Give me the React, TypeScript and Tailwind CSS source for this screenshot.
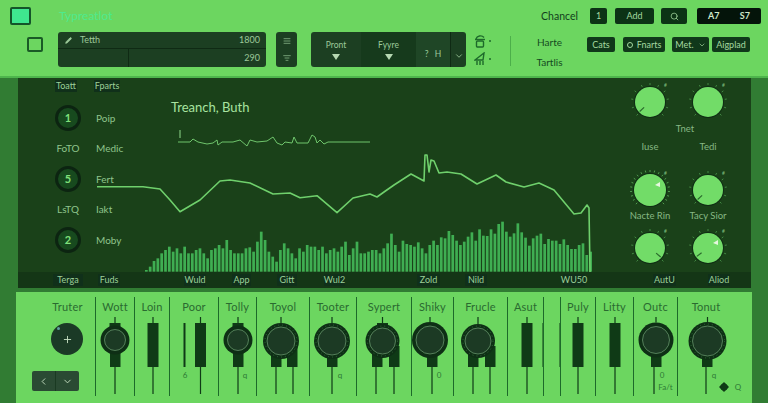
import { AlignJustify, ChevronDown, ChevronLeft, ListFilter, Pencil, Plus, Search } from 'lucide-react';

// waveform traces, page coordinates
const mainLine =
  '97,186.7 143,186.7 160,189 170,200 180,211.7 200,200 220,181 230,180 250,183 273,194 290,193 300,197.7 317,195.7 337,212.7 353,198 370,194 377,197 384,192 394,185 411,174 424,181 425,155 427,155 429,172 431,160 434,161 439,173 447,172 461,174 477,184 496,175 506,182 524,187 539,183 554,190 574,214 581,213 587,205 589,208 590,272';

const smallLine =
  '178,142 190,142 193,139 198,142 207,144 213,143 217,140 218,145 222,142 233,142 240,140 247,146 250,140 257,142 267,141 273,137 277,143 282,145 285,142 292,143 294,137 297,143 308,143 312,135 315,137 317,143 320,140 324,144 328,142 370,142';

const barTops = [
  585, 575, 558, 550, 535, 525, 515, 530, 520, 535, 515, 535, 535, 525, 520, 535, 550, 525, 520, 510, 520, 495, 525, 535,
  535, 535, 520, 517, 530, 500, 470, 495, 530, 545, 560, 525, 505, 520, 535, 550, 520, 530, 510, 515, 515, 525, 515, 535,
  525, 520, 530, 515, 500, 540, 520, 500, 535, 535, 530, 525, 525, 535, 520, 505, 476, 510, 530, 497, 507, 510, 515, 502,
  520, 535, 510, 497, 510, 487, 490, 468, 480, 497, 510, 500, 485, 472, 497, 463, 482, 483, 463, 476, 447, 440, 470, 485,
  475, 445, 472, 488, 512, 490, 482, 476, 507, 492, 497, 497, 507, 493, 510, 522, 522, 510, 505, 540, 530,
];

function Chip({ className, children }: { className: string; children: React.ReactNode }) {
  return (
    <span className={`flex h-[12px] items-center justify-center whitespace-nowrap bg-[#10301a] text-[9px] text-[#9ccf98] ${className}`}>
      {children}
    </span>
  );
}

function HeaderButton({ className, children }: { className: string; children: React.ReactNode }) {
  return (
    <div className={`flex h-[15px] items-center justify-center gap-1 rounded-[2px] bg-[#10381a] text-[9px] text-[#a5d8a0] ${className}`}>
      {children}
    </div>
  );
}

function NumberBadge({ value }: { value: number }) {
  return (
    <div className="flex h-[26px] w-[26px] shrink-0 items-center justify-center rounded-full border-[3px] border-[#0c2411] bg-[#174a1e] text-[11px] font-bold text-[#7fe07a]">
      {value}
    </div>
  );
}

function PanelRow({ tag, label, value }: { tag?: string; label: string; value?: number }) {
  return (
    <div className="flex h-[30.5px] items-center">
      <div className="flex w-[26px] shrink-0 justify-center whitespace-nowrap text-[10px] text-[#8fc48c]">
        {value ? <NumberBadge value={value} /> : tag}
      </div>
      <span className="ml-[15px] text-[10px] text-[#8fc48c]">{label}</span>
    </div>
  );
}

function DialKnob({ needle, big, marker }: { needle?: number; big?: boolean; marker?: boolean }) {
  const ticks = Array.from({ length: big ? 21 : 11 }, (_, i) => (-225 + (i * 270) / (big ? 20 : 10)) * (Math.PI / 180));
  const r = big ? 16 : 15;
  return (
    <svg width="44" height="44" viewBox="-22 -22 44 44" className="overflow-visible">
      {ticks.map((a, i) => (
        <line
          key={i}
          x1={Math.cos(a) * (r + 2)}
          y1={Math.sin(a) * (r + 2)}
          x2={Math.cos(a) * (r + 4)}
          y2={Math.sin(a) * (r + 4)}
          stroke={big ? '#5fb35e' : '#4e9a4f'}
          strokeWidth="0.8"
        />
      ))}
      <text x="14" y="-15" fontSize="5" fill="#7fbf7c">#</text>
      <circle r={r + 1} fill="#0f2e14" />
      <circle r={r} fill="#72dc68" />
      {needle !== undefined && (
        <line
          x1={Math.cos(needle) * (r - 7)}
          y1={Math.sin(needle) * (r - 7)}
          x2={Math.cos(needle) * (r - 1)}
          y2={Math.sin(needle) * (r - 1)}
          stroke="#2a6a2c"
          strokeWidth="1.2"
        />
      )}
      {marker && <path d="M5 -5 L10 -8 L10 -3 Z" fill="#e6f7df" />}
    </svg>
  );
}

const ink = '#0f3a16';

function Knob({
  x,
  y,
  r,
  blocks,
  lines,
  dots,
  cap,
}: {
  x: number;
  y: number;
  r: number;
  blocks: number[];
  lines: number[];
  dots?: boolean;
  cap?: boolean;
}) {
  const inner = r - 4;
  return (
    <>
      {lines.map((lx) => (
        <line key={lx} x1={lx} y1={360} x2={lx} y2={394} stroke={ink} strokeWidth="1.2" />
      ))}
      <line x1={x} y1={317} x2={x} y2={y - r} stroke={ink} strokeWidth="1.2" />
      {cap && <rect x={x - 5.5} y={323} width={11} height={8} fill={ink} />}
      {blocks.map((bx) => (
        <rect key={bx} x={bx} y={y + 5} width={10.5} height={367 - y - 5} fill={ink} />
      ))}
      <circle cx={x} cy={y} r={r} fill="#0e2f15" />
      {dots && <circle cx={x} cy={y} r={r - 2} fill="none" stroke="#2f6a38" strokeWidth="1" strokeDasharray="1 3" />}
      <circle cx={x} cy={y} r={inner} fill="#1c3a24" stroke="#6f9f72" strokeWidth="0.7" />
    </>
  );
}

function Fader({ x }: { x: number }) {
  return (
    <>
      <line x1={x} y1={317} x2={x} y2={394} stroke={ink} strokeWidth="1.2" />
      <rect x={x - 5.5} y={323} width={11} height={44} fill={ink} />
    </>
  );
}

function Strip({
  x,
  w,
  label,
  className = '',
  children,
}: {
  x: number;
  w: number;
  label?: string;
  className?: string;
  children?: React.ReactNode;
}) {
  return (
    <div className={`relative flex shrink-0 flex-col ${className}`} style={{ width: w }}>
      <div className="flex h-[19px] items-start justify-center text-[11px] leading-[19px] tracking-[0.2px] text-[#2a6a30]">{label}</div>
      <svg width={w} height={85} viewBox={`${x} 315 ${w} 85`} className="absolute left-0 top-[18px]">
        {children}
      </svg>
    </div>
  );
}

function Tiny({ x, y, children }: { x: number; y: number; children: string }) {
  return (
    <text x={x} y={y} fontSize="8" textAnchor="middle" fill="#2d7a35">
      {children}
    </text>
  );
}

export default function App() {
  return (
    <div className="flex h-[403px] w-[768px] flex-col overflow-hidden bg-[#6cd660] font-[Lato,sans-serif]">
      {/* Header */}
      <header className="h-[76px] shrink-0">
        <div className="flex h-[32px]">
          <div className="ml-[10px] mt-[7px] h-[18px] w-[21px] rounded-[2px] border-2 border-[#14552a] bg-[#3fe68f]" />
          <span className="ml-[28px] mt-[8px] text-[12px] leading-[16px] text-[#4eea8e]">Typreatlot</span>
          <div className="ml-auto mr-[7px] mt-[8px] flex items-start">
            <span className="mr-[12px] text-[10.5px] leading-[16px] text-[#123f1c]">Chancel</span>
            <div className="flex h-[16px] w-[17px] items-center justify-center rounded-[2px] bg-[#0c3315] text-[9px] text-[#a5d8a0]">1</div>
            <div className="ml-[8px] flex h-[16px] w-[39px] items-center justify-center rounded-[2px] bg-[#0c3315] text-[9px] text-[#a5d8a0]">Add</div>
            <div className="ml-[7px] flex h-[16px] w-[26px] items-center justify-center rounded-[2px] bg-[#0c3315] text-[#a5d8a0]">
              <Search size={9} />
            </div>
            <div className="ml-[10px] flex h-[16px] w-[64px] items-center justify-between rounded-[2px] bg-[#04140a] px-[11px] text-[9px] font-bold text-[#cfe9cb]">
              <span>A7</span>
              <span>S7</span>
            </div>
          </div>
        </div>
        <div className="flex h-[35px]">
          <div className="ml-[27px] mt-[5px] h-[15px] w-[16px] rounded-[2px] border-2 border-[#1a5a26]" />
          <div className="ml-[15px] flex h-[35px] w-[208px] flex-col rounded-[3px] bg-[#1c3f22] text-[9px] text-[#9cc99a]">
            <div className="flex h-[17px] items-center border-b border-[#0f2a14] pl-[7px] pr-[6px]">
              <Pencil size={7} fill="currentColor" />
              <span className="ml-[8px]">Tetth</span>
              <span className="ml-auto">1800</span>
            </div>
            <div className="flex flex-1">
              <div className="w-[71px] border-r border-[#0f2a14]" />
              <div className="flex flex-1 items-center justify-end pr-[6px]">290</div>
            </div>
          </div>
          <div className="ml-[10px] flex h-[35px] w-[21px] flex-col items-center justify-around rounded-[3px] bg-[#1c3f22] text-[#9cc99a]">
            <AlignJustify size={8} />
            <ListFilter size={8} />
          </div>
          <div className="ml-[14px] flex h-[35px] w-[155px] overflow-hidden rounded-[3px] bg-[#1c3f22] text-[8.5px] text-[#9cc99a]">
            <div className="flex w-[50px] flex-col items-center justify-center gap-[3px]">
              <span>Pront</span>
              <span className="h-0 w-0 border-x-[4px] border-t-[6px] border-x-transparent border-t-[#b6d8b2]" />
            </div>
            <div className="flex w-[55px] flex-col items-center justify-center gap-[3px] bg-[#163a1c]">
              <span>Fyyre</span>
              <span className="h-0 w-0 border-x-[4px] border-t-[6px] border-x-transparent border-t-[#b6d8b2]" />
            </div>
            <div className="flex w-[34px] items-end justify-center gap-[6px] bg-[#1f4626] pb-[6px]">
              <span>?</span>
              <span>H</span>
            </div>
            <div className="flex w-[16px] items-end justify-center border-l border-[#0f2a14] pb-[6px]">
              <ChevronDown size={10} />
            </div>
          </div>
          <div className="ml-[8px] flex w-[20px] flex-col items-start gap-[4px] pt-[2px] text-[#1d6a2a]">
            <div className="flex items-center gap-[3px]">
              <svg width="12" height="14" viewBox="0 0 12 14" fill="none" stroke="currentColor" strokeWidth="1.4">
                <path d="M2 5 A4.5 4 0 0 1 10 3.5" />
                <path d="M1 5.5 H11" />
                <rect x="2.5" y="7" width="7" height="6" rx="1" />
              </svg>
              <span className="h-[2px] w-[2px] rounded-full bg-current" />
            </div>
            <div className="flex items-center gap-[3px]">
              <svg width="12" height="14" viewBox="0 0 12 14" fill="none" stroke="currentColor" strokeWidth="1.4">
                <path d="M1 8 L10 1 L9 8 Z" />
                <path d="M3 9 V13 M6 9 V13 M9 9 V13" />
              </svg>
              <span className="h-[2px] w-[2px] rounded-full bg-current" />
            </div>
          </div>
          <div className="ml-[16px] mt-[4px] h-[30px] w-px bg-[#4caf4a]" />
          <div className="ml-[25px] flex w-[27px] flex-col items-center whitespace-nowrap pt-[3px] text-[10px] leading-[14px] text-[#144a1f]">
            <span>Harte</span>
            <span className="mt-[6px]">Tartlis</span>
          </div>
          <div className="ml-[24px] mt-[5px] flex items-start">
            <HeaderButton className="w-[28px]">Cats</HeaderButton>
            <HeaderButton className="ml-[8px] w-[42px]">
              <span className="h-[6px] w-[6px] rounded-full border border-current" />
              Fnarts
            </HeaderButton>
            <HeaderButton className="ml-[7px] w-[37px]">
              Met.
              <ChevronDown size={8} />
            </HeaderButton>
            <HeaderButton className="ml-[3px] w-[38px]">Aigplad</HeaderButton>
          </div>
        </div>
      </header>

      {/* Body */}
      <div className="flex flex-1 flex-col border-t-[2px] border-[#4eb54c] bg-[#317c33]">
        <section className="ml-[18px] mr-[17px] flex h-[210px] shrink-0 flex-col bg-[#1a4119]">
          <div className="flex min-h-0 flex-1">
            <div className="flex w-[584px] shrink-0 flex-col">
              <div className="flex h-[16px] items-start pl-[37px] pt-[2px]">
                <Chip className="w-[22px]">Toatt</Chip>
                <Chip className="ml-[17px] w-[26px]">Fparts</Chip>
              </div>
              <div className="flex flex-1 pl-[37px]">
                <div className="w-[42px] shrink-0 whitespace-nowrap pt-[9px]">
                  {/* row tags and labels */}
                  <PanelRow value={1} label="Poip" />
                  <PanelRow tag="FoTO" label="Medic" />
                  <PanelRow value={5} label="Fert" />
                  <PanelRow tag="LsTQ" label="Iakt" />
                  <PanelRow value={2} label="Moby" />
                </div>
                <div className="relative flex-1">
                  <span className="absolute left-[74px] top-[4px] text-[13px] leading-[18px] text-[#a8e4a0]">Treanch, Buth</span>
                  <svg viewBox="97 94 505 178" className="absolute inset-0 h-full w-full overflow-visible" preserveAspectRatio="none">
                    <line x1="180" y1="130" x2="180" y2="138" stroke="#8ed98a" strokeWidth="1" />
                    <polyline points={smallLine} fill="none" stroke="#6fc56c" strokeWidth="1" />
                    {barTops.map((top, i) => (
                      <rect key={i} x={145 + i * 3.83} y={top / 3 + 75} width={2.7} height={(590 - top) / 3} fill="#3fae52" />
                    ))}
                    <polyline points={mainLine} fill="none" stroke="#6fd06c" strokeWidth="1.6" strokeLinejoin="round" />
                  </svg>
                </div>
              </div>
            </div>
            <div className="ml-[19px] flex w-[116px] shrink-0 flex-col pt-[2px] text-[9.5px] leading-[12px] text-[#86b884]">
              <div className="grid grid-cols-2 justify-items-center">
                <DialKnob needle={2.4} />
                <DialKnob />
              </div>
              <div className="mt-[-1px] pl-[12px] text-center">Tnet</div>
              <div className="mt-[6px] grid grid-cols-2 justify-items-center">
                <span>Iuse</span>
                <span>Tedi</span>
              </div>
              <div className="mt-[15px] grid grid-cols-2 justify-items-center">
                <DialKnob big marker />
                <DialKnob needle={2.4} />
              </div>
              <div className="mt-[-2px] grid grid-cols-2 justify-items-center whitespace-nowrap">
                <span>Nacte Rin</span>
                <span>Tacy Sior</span>
              </div>
              <div className="mt-[4px] grid grid-cols-2 justify-items-center">
                <DialKnob needle={0.7} />
                <DialKnob needle={2.5} marker />
              </div>
            </div>
          </div>
          <div className="flex h-[16px] shrink-0 items-center bg-[#143616]">
            <Chip className="ml-[35px] w-[30px]">Terga</Chip>
            <Chip className="ml-[15px] w-[22px]">Fuds</Chip>
            <Chip className="ml-[64px] w-[22px]">Wuld</Chip>
            <Chip className="ml-[26px] w-[19px]">App</Chip>
            <Chip className="ml-[26px] w-[20px]">Gitt</Chip>
            <Chip className="ml-[27px] w-[21px]">Wul2</Chip>
            <Chip className="ml-[72px] w-[23px]">Zold</Chip>
            <Chip className="ml-[25px] w-[22px]">Nild</Chip>
            <Chip className="ml-[76px] w-[22px]">WU50</Chip>
            <Chip className="ml-[68px] w-[23px]">AutU</Chip>
            <Chip className="ml-[32px] w-[22px]">Aliod</Chip>
          </div>
        </section>

        {/* Channel strips */}
        <section className="ml-[16px] mr-[16px] mt-[4px] flex flex-1 bg-[#6cd660] pt-[5px]">
          <div className="relative flex w-[79px] shrink-0 flex-col pl-[24px]">
            <div className="flex h-[19px] items-start justify-center text-[11px] leading-[19px] tracking-[0.2px] text-[#2a6a30]">Truter</div>
            <div className="relative ml-[11px] mt-[7px] flex h-[32px] w-[32px] items-center justify-center rounded-full bg-[#1b3a26] text-[#c6dfc2]">
              <span className="absolute left-[6px] top-[4px] h-[3px] w-[3px] rounded-full bg-[#5f9fa0]" />
              <Plus size={11} />
            </div>
            <div className="mt-[16px] flex h-[20px] w-[47px] -translate-x-[8px] overflow-hidden rounded-[2px] bg-[#2a4a33] text-[#c6dfc2]">
              <div className="flex flex-1 items-center justify-center border-r border-[#1a3a22]">
                <ChevronLeft size={11} />
              </div>
              <div className="flex flex-1 items-center justify-center">
                <ChevronDown size={11} />
              </div>
            </div>
          </div>
          <div className="flex h-[99px] flex-1 [&>div]:border-l-[1.5px] [&>div]:border-[#1d6a2a]">
            <Strip x={95} w={39} label="Wott">
              <Knob x={114} y={340} r={14.5} blocks={[109]} lines={[114]} cap />
            </Strip>
            <Strip x={134} w={35} label="Loin">
              <Fader x={152} />
            </Strip>
            <Strip x={169} w={49} label="Poor">
              <rect x={182.5} y={323} width={2} height={44} fill={ink} />
              <Fader x={199.5} />
              <Tiny x={184} y={378}>6</Tiny>
            </Strip>
            <Strip x={218} w={38} label="Tolly">
              <Knob x={237} y={340} r={14.5} blocks={[232]} lines={[237]} cap />
              <Tiny x={244} y={378}>q</Tiny>
            </Strip>
            <Strip x={256} w={53} label="Toyol">
              <Knob x={280} y={341} r={18} blocks={[270, 286]} lines={[275, 292]} dots />
            </Strip>
            <Strip x={309} w={47} label="Tooter">
              <Knob x={331} y={341} r={18} blocks={[326]} lines={[331]} dots />
              <Tiny x={339} y={378}>q</Tiny>
            </Strip>
            <Strip x={356} w={55} label="Sypert">
              <Knob x={381.5} y={341} r={17} blocks={[371, 388]} lines={[375, 393]} dots cap />
            </Strip>
            <Strip x={411} w={42} label="Shiky">
              <Knob x={429} y={340} r={18} blocks={[426]} lines={[431]} />
              <Tiny x={438} y={378}>0</Tiny>
            </Strip>
            <Strip x={453} w={54} label="Frucle">
              <Knob x={477} y={341} r={17} blocks={[467, 484]} lines={[472, 489]} dots />
            </Strip>
            <Strip x={507} w={36} label="Asut">
              <Fader x={526} />
              <rect x={541.5} y={323} width={1.5} height={44} fill={ink} />
            </Strip>
            <Strip x={543} w={17}>
              <rect x={558.5} y={323} width={1.5} height={44} fill={ink} />
            </Strip>
            <Strip x={560} w={35} label="Puly">
              <Fader x={577} />
            </Strip>
            <Strip x={595} w={38} label="Litty">
              <Fader x={614} />
            </Strip>
            <Strip x={633} w={44} label="Outc">
              <Knob x={655} y={340} r={17.5} blocks={[650]} lines={[653]} />
              <Tiny x={661} y={378}>0</Tiny>
              <Tiny x={664.5} y={390}>Fa/t</Tiny>
            </Strip>
            <Strip x={677} w={75} label="Tonut" className="pr-[18px]">
              <Knob x={706.5} y={341} r={19} blocks={[701]} lines={[705]} dots />
              <Tiny x={713} y={378}>q</Tiny>
              <path d="M723 382 L728 387 L723 392 L718 387 Z" fill={ink} />
              <circle cx={723} cy={387} r={3.5} fill={ink} />
              <Tiny x={737} y={390}>Q</Tiny>
            </Strip>
          </div>
        </section>
      </div>
    </div>
  );
}
